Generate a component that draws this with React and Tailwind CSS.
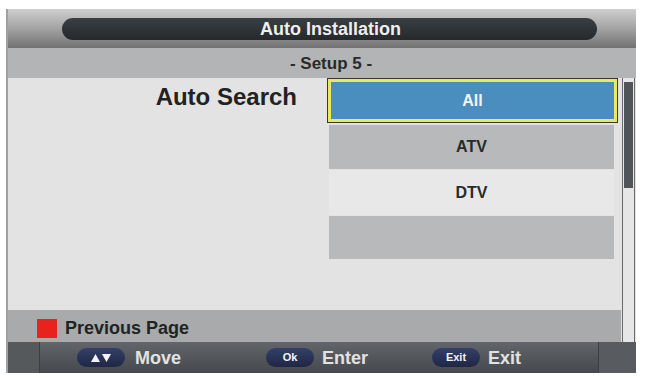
import React from "react";

const font = { fontFamily: '"Liberation Sans", Arial, sans-serif' };

function Pill({ children, size }) {
  return (
    <div className={`w-[48px] h-[19px] rounded-full bg-gradient-to-b from-[#34406a] to-[#1f2744] flex items-center justify-center font-bold text-[#f2f4fa] leading-none ${size}`}>
      {children}
    </div>
  );
}

export default function App() {
  return (
    <div className="w-[645px] h-[378px] bg-white pt-[9px] pl-[6px]" style={font}>
      <div className="w-[630px] h-[364px] flex flex-col border-l-2 border-[#a0a0a0]">
        {/* header */}
        <div className="h-[39px] bg-gradient-to-b from-[#cfcfcf] via-[#a3a3a3] to-[#727272] flex items-center pl-[54px] pr-[39px]">
          <div className="flex-1 h-[22px] rounded-full bg-gradient-to-b from-[#3a3f43] to-[#25292c] flex items-center justify-center">
            <span className="text-[18px] font-bold text-[#eeeeee] leading-none pl-[2px]">Auto Installation</span>
          </div>
        </div>
        {/* setup row */}
        <div className="h-[30px] bg-[#b3b4b6] flex items-center justify-center">
          <span className="text-[17px] font-bold text-[#2a2a2a] leading-none pl-[18px]">- Setup 5 -</span>
        </div>
        {/* middle */}
        <div className="h-[264px] flex">
          <div className="w-[613px] flex flex-col">
            <div className="h-[232px] bg-[#e3e3e3] flex">
              <div className="w-[319px] flex justify-end pr-[30px] pt-[5px]">
                <span className="text-[24px] font-bold text-[#222222] leading-[28px]">Auto Search</span>
              </div>
              <div className="w-[291px] flex flex-col">
                <div className="h-[45px] border border-[#3a3a2a] bg-[#e6ea5c] p-[3px]">
                  <div className="h-full bg-[#4a8dbf] flex items-center justify-center">
                    <span className="text-[16px] font-bold text-[#eef6ff] leading-none">All</span>
                  </div>
                </div>
                <div className="ml-[2px] w-[285px] mt-[2px] h-[44px] bg-[#b8b9bb] flex items-center justify-center">
                  <span className="text-[16px] font-bold text-[#2a2a2a] leading-none">ATV</span>
                </div>
                <div className="ml-[2px] w-[285px] mt-[1px] h-[45px] bg-[#e8e8e8] flex items-center justify-center">
                  <span className="text-[16px] font-bold text-[#2a2a2a] leading-none">DTV</span>
                </div>
                <div className="ml-[2px] w-[285px] mt-[1px] h-[43px] bg-[#b8b9bb]" />
              </div>
            </div>
            <div className="h-[32px] bg-[#a9aaac] flex items-center pl-[29px]">
              <div className="w-[20px] h-[19px] bg-[#e8231e] mt-[4px]" />
              <span className="ml-[8px] text-[18px] font-bold text-[#1f2422] leading-none mt-[3px]">Previous Page</span>
            </div>
          </div>
          {/* scrollbar */}
          <div className="w-[15px] bg-[#e3e3e3] pl-[1px]">
            <div className="w-[13px] h-full border-x border-[#6a6a6a] bg-[#e6e6e6] pt-[4px] px-[1px]">
              <div className="h-[106px] bg-[#50555a]" />
            </div>
          </div>
        </div>
        {/* bottom bar */}
        <div className="h-[31px] bg-gradient-to-b from-[#62666a] to-[#45494d] flex items-center">
          <div className="w-[32px] h-full bg-[#55595c] border-r border-[#3c3f42]" />
          <div className="w-[37px]" />
          <div className="w-[189px] flex items-center">
            <Pill size="text-[11px]">
              <svg width="22" height="10" viewBox="0 0 22 10">
                <polygon points="1,9 10,9 5.5,1" fill="#f2f4fa" />
                <polygon points="12,1 21,1 16.5,9" fill="#f2f4fa" />
              </svg>
            </Pill>
            <span className="ml-[10px] text-[18px] font-bold text-[#e2e2e2] leading-none">Move</span>
          </div>
          <div className="w-[166px] flex items-center">
            <Pill size="text-[11px]">Ok</Pill>
            <span className="ml-[8px] text-[18px] font-bold text-[#e2e2e2] leading-none">Enter</span>
          </div>
          <div className="w-[166px] flex items-center">
            <Pill size="text-[11px]">Exit</Pill>
            <span className="ml-[8px] text-[18px] font-bold text-[#e2e2e2] leading-none">Exit</span>
          </div>
          <div className="flex-1" />
          <div className="w-[38px] h-full bg-[#585c60] border-l border-[#3c3f42]" />
        </div>
      </div>
    </div>
  );
}
